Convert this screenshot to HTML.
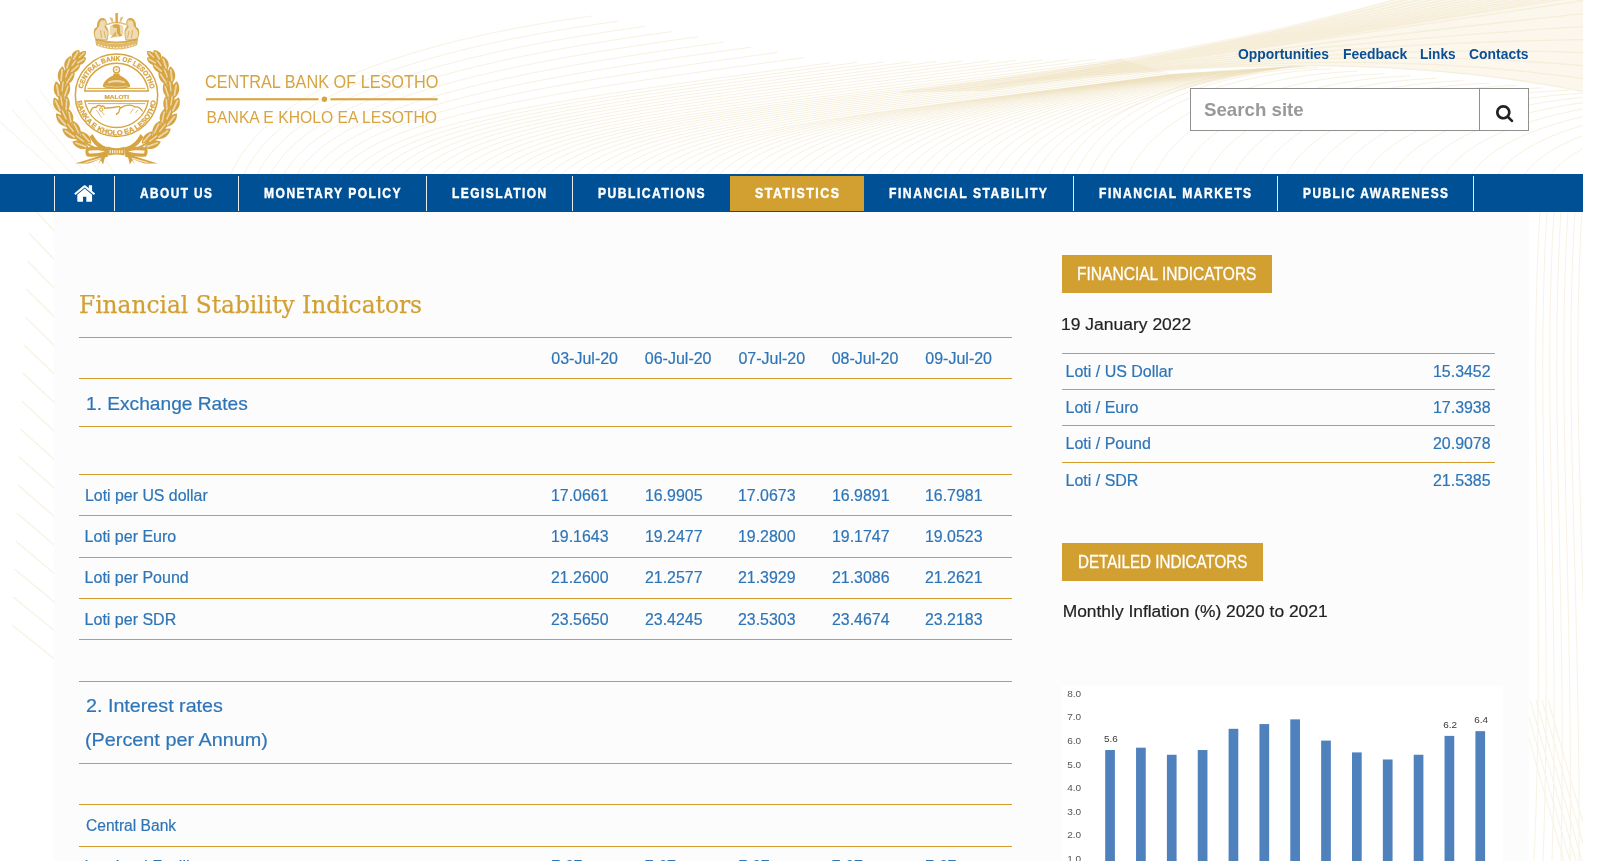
<!DOCTYPE html>
<html lang="en"><head><meta charset="utf-8"><title>Financial Stability Indicators - Central Bank of Lesotho</title>
<style>
html,body{margin:0;padding:0}
body{width:1603px;height:861px;overflow:hidden;background:#fff;position:relative;font-family:'Liberation Sans',sans-serif;}
.abs{position:absolute}
.t{position:absolute;white-space:nowrap;line-height:1;transform-origin:0 50%;display:block}
#page{position:absolute;left:0;top:0;width:1583px;height:861px;overflow:hidden;will-change:transform}
#content{position:absolute;left:54px;top:212px;width:1475px;height:649px;background:#fcfcfc}
#nav{position:absolute;left:0;top:174px;width:1583px;height:38px;background:#005096}
#nav i{position:absolute;top:2px;height:35px;width:1px;background:#e9e9e9}
#nav b.act{position:absolute;left:730px;top:2px;width:134px;height:35px;background:#d29f31}
.hr{position:absolute;height:1px;background:#d59c2d}
.box{position:absolute;background:#d29f31}
#search{position:absolute;left:1190px;top:88px;width:337px;height:41px;border:1px solid #909090;background:#fff}
#search i{position:absolute;left:288px;top:0;width:1px;height:100%;background:#909090}
</style></head>
<body>
<div id="page">
<svg class="abs" style="left:0;top:0" width="1583" height="861" viewBox="0 0 1583 861" aria-hidden="true"><path d="M940,92Q1200,55 1400,-2L1585,-2L1585,92Q1330,40 940,92Z" fill="#f0e2be" opacity=".28"/><path d="M230.0,176C262.6,96.0 392.9,43.1 592.0,16.0M243.2,176C277.0,98.6 412.1,49.3 618.5,21.2M256.4,176C291.4,101.2 431.3,55.5 645.0,26.4M269.6,176C305.8,103.8 450.5,61.7 671.5,31.6M282.8,176C320.2,106.4 469.6,67.9 698.0,36.8M296.0,176C334.6,109.0 488.8,74.1 724.5,42.0M309.2,176C349.0,111.6 508.0,80.3 751.0,47.2M322.4,176C363.4,114.2 527.2,86.5 777.5,52.4M335.6,176C377.8,116.8 546.4,92.7 804.0,57.6M348.8,176C392.2,119.4 565.6,98.9 830.5,62.8M362.0,176C406.6,119.2 584.8,99.6 857.0,62.4M375.2,176C420.9,119.0 603.9,100.2 883.5,62.1M388.4,176C435.3,118.9 623.1,100.9 910.0,61.8M401.6,176C449.7,118.7 642.3,101.5 936.5,61.4M414.8,176C464.1,118.5 661.5,102.2 963.0,61.0M428.0,176C478.5,118.3 680.7,102.8 989.5,60.7M441.2,176C492.9,118.2 699.9,103.5 1016.0,60.3M454.4,176C507.3,118.0 719.0,104.1 1042.5,60.0M467.6,176C521.7,117.8 738.2,104.8 1069.0,59.6M480.8,176C536.1,117.7 757.4,105.4 1095.5,59.3M494.0,176C550.5,117.5 776.6,106.0 1122.0,58.9M507.2,176C562.9,118.3 785.8,107.0 1126.2,60.5M520.4,176C575.3,118.9 794.9,107.5 1130.4,61.8M533.6,176C587.7,119.5 804.0,108.1 1134.6,63.0M546.8,176C600.1,120.1 813.2,108.6 1138.8,64.2M560.0,176C612.5,120.7 822.3,109.2 1143.0,65.5M573.2,176C624.9,121.3 831.5,109.7 1147.2,66.7M586.4,176C637.2,122.0 840.6,110.3 1151.4,67.9M599.6,176C649.6,122.6 849.8,110.9 1155.6,69.2M612.8,176C662.0,123.2 858.9,111.4 1159.8,70.4M626.0,176C674.4,123.8 868.1,112.0 1164.0,71.6M639.2,176C686.8,124.4 877.2,112.5 1168.2,72.9M652.4,176C699.2,125.0 886.4,113.1 1172.4,74.1M665.6,176C711.6,124.9 895.5,112.1 1176.6,73.8M678.8,176C724.0,124.8 904.7,111.2 1180.8,73.5M692.0,176C736.4,124.6 913.8,110.3 1185.0,73.3M705.2,176C748.8,124.5 923.0,109.3 1189.2,73.0M718.4,176C761.1,124.4 932.2,108.4 1193.4,72.7M731.6,176C773.5,124.2 941.3,107.4 1197.6,72.5M744.8,176C785.9,124.1 950.4,106.5 1201.8,72.2M758.0,176C798.3,124.0 959.6,105.5 1206.0,71.9M771.2,176C810.7,123.8 968.7,104.6 1210.2,71.7M784.4,176C823.1,123.7 977.9,103.6 1214.4,71.4M797.6,176C835.5,123.6 987.0,102.7 1218.6,71.1M810.8,176C847.9,123.4 996.2,101.8 1222.8,70.9M824.0,176C860.3,123.3 1005.4,100.8 1227.0,70.6M837.2,176C872.7,123.2 1014.5,99.9 1231.2,70.3M850.4,176C885.0,123.0 1023.6,98.9 1235.4,70.1M863.6,176C897.4,122.9 1032.8,98.0 1239.6,69.8M876.8,176C909.8,122.8 1041.9,97.0 1243.8,69.5M890.0,176C922.2,122.6 1051.1,96.1 1248.0,69.2M903.2,176C934.6,122.5 1060.2,95.2 1252.2,69.0M916.4,176C947.0,122.4 1069.4,94.2 1256.4,68.7M929.6,176C959.4,122.2 1078.5,93.3 1260.6,68.4M942.8,176C971.8,122.1 1087.7,92.3 1264.8,68.2M956.0,176C984.2,122.0 1096.8,91.4 1269.0,67.9M969.2,176C996.6,121.8 1106.0,90.4 1273.2,67.6M982.4,176C1008.9,121.7 1115.2,89.5 1277.4,67.4M995.6,176C1021.3,121.5 1124.3,88.5 1281.6,67.1M1008.8,176C1033.7,121.4 1133.4,87.6 1285.8,66.8M1022.0,176C1046.1,121.3 1142.6,86.7 1290.0,66.6M1035.2,176C1058.5,121.1 1151.7,85.7 1294.2,66.3M1048.4,176C1070.9,121.0 1160.9,84.8 1298.4,66.0M1061.6,176C1083.3,121.1 1170.0,71.1 1302.6,66.2M1074.8,176C1095.7,121.3 1179.2,71.3 1306.8,66.6M1088.0,176C1108.7,121.8 1191.5,72.2 1318.0,67.6M1101.2,176C1121.9,122.4 1204.7,73.4 1331.2,68.8M1127.6,176C1148.3,123.6 1231.1,75.8 1357.6,71.2M1154.0,176C1174.7,124.8 1257.5,78.2 1384.0,73.6M1180.4,176C1201.1,126.0 1283.9,80.5 1410.4,75.9M1206.8,176C1227.5,127.2 1310.3,82.9 1436.8,78.3M1233.2,176C1253.9,128.3 1336.7,85.3 1463.2,80.7M1259.6,176C1280.3,129.5 1363.1,87.7 1489.6,83.1M1286.0,176C1306.7,130.7 1389.5,90.0 1516.0,85.4M1312.4,176C1333.1,131.9 1415.9,92.4 1542.4,87.8M1338.8,176C1359.5,133.1 1442.3,94.8 1568.8,90.2M1365.2,176C1385.9,134.3 1468.7,97.2 1595.2,92.6M1391.6,176C1412.3,135.5 1495.1,99.5 1621.6,94.9M1418.0,176C1438.7,136.7 1521.5,101.9 1648.0,97.3M1444.4,176C1465.1,137.8 1547.9,104.3 1674.4,99.7M1470.8,176C1491.5,139.0 1574.3,106.7 1700.8,102.1M1497.2,176C1517.9,140.2 1600.7,109.0 1727.2,104.4M1523.6,176C1544.3,141.4 1627.1,111.4 1753.6,106.8M1550.0,176C1570.7,142.6 1653.5,113.8 1780.0,109.2" fill="none" stroke="#e6d3a3" stroke-width="1" opacity=".32"/><path d="M900.0,92.2Q1200.0,55.0 1400.0,-2.0M904.0,92.2Q1206.2,54.3 1413.1,-2.0M908.0,92.1Q1212.4,53.6 1426.2,-2.0M912.0,92.0Q1218.6,52.9 1439.3,-2.0M916.0,91.9Q1224.8,52.1 1452.4,-2.0M920.0,91.8Q1231.0,51.4 1465.5,-2.0M924.0,91.7Q1237.1,50.7 1478.6,-2.0M928.0,91.6Q1243.3,50.0 1491.7,-2.0M932.0,91.5Q1249.5,49.3 1504.8,-2.0M936.0,91.4Q1255.7,48.6 1517.9,-2.0M940.0,91.3Q1261.9,47.9 1531.0,-2.0M944.0,91.3Q1268.1,47.1 1544.0,-2.0M948.0,91.2Q1274.3,46.4 1557.1,-2.0M952.0,91.1Q1280.5,45.7 1570.2,-2.0M956.0,91.0Q1286.7,45.0 1585.0,0.3M960.0,90.9Q1292.9,44.3 1585.0,13.4M964.0,90.8Q1299.0,43.6 1585.0,26.5M968.0,90.7Q1305.2,42.9 1585.0,39.6M972.0,90.6Q1311.4,42.1 1585.0,52.7M976.0,90.5Q1317.6,41.4 1585.0,65.8M980.0,90.5Q1323.8,40.7 1585.0,78.9M984.0,90.4Q1330.0,40.0 1585.0,92.0" fill="none" stroke="#e3cb92" stroke-width="1.3" opacity=".22"/><path d="M30.0,205L62.0,239M28.8,233L61.5,267M27.6,261L61.0,295M26.4,289L60.5,323M25.2,317L60.0,351M24.0,345L59.5,379M22.8,373L59.0,407M21.6,401L58.5,435M20.4,429L58.0,463M19.2,457L57.5,491M18.0,485L57.0,519M16.8,513L56.5,547M15.6,541L56.0,575M14.4,569L55.5,603M13.2,597L55.0,631M12.0,625L54.5,659" fill="none" stroke="#efe3c2" stroke-width="1.6" opacity=".42"/><path d="M-2,120L60,176M12,110L74,176M26,100L88,176M40,90L102,176M54,80L116,176" fill="none" stroke="#efe3c2" stroke-width="1.4" opacity=".3"/><path d="M1540,212C1528,400 1546,600 1534,861M1547,212C1535,400 1553,600 1543,861M1554,212C1542,400 1560,600 1552,861M1561,212C1549,400 1567,600 1561,861M1568,212C1556,400 1574,600 1570,861M1575,212C1563,400 1581,600 1579,861M1582,212C1570,400 1588,600 1588,861M1518,700L1564,861M1524,700L1570,861M1530,700L1576,861M1536,700L1582,861M1542,700L1588,861M1548,700L1594,861" fill="none" stroke="#efe3c2" stroke-width="1.1" opacity=".42"/></svg>
<div id="content"></div>
<header>
<svg class="abs" style="left:50px;top:8px" width="392" height="160" viewBox="50 8 392 160" role="img" aria-label="Central Bank of Lesotho"><path d="M95.2,40.5 Q116.5,47.5 138,40.3 L137.2,45.2 Q116.5,53.5 96.2,45.4 Z" fill="#d6a440" opacity=".78"/>
<path d="M96,39.6 Q116.5,45.6 137.3,39.4" fill="none" stroke="#d6a440" stroke-width="2.2" opacity=".9"/>
<path d="M98,44.6 Q116.5,51 135.4,44.4" fill="none" stroke="#fff" stroke-width="1.3" stroke-dasharray="1.6 1.5" opacity=".75"/>
<path d="M99.5,47 Q116.5,52.8 133.6,46.8" fill="none" stroke="#fff" stroke-width=".8" stroke-dasharray="1.2 2" opacity=".6"/>
<path d="M96.0,40 C93.5,34 94.0,29 97.5,27 C97.0,22 99.5,18.3 103.0,18.6 C106.5,19 107.0,23 105.5,26.5 C108.5,29 108.5,35 107.0,40 Z" fill="#d6a440" fill-opacity=".38" stroke="#d6a440" stroke-width="1.1" stroke-opacity=".85"/>
<path d="M97.5,27.5 C95.0,27 93.7,30 94.5,34 C95.0,31 96.0,29.5 97.5,29 Z" fill="#d6a440" opacity=".8"/>
<path d="M104.5,20 C101.5,18 98.0,20.5 98.2,27" fill="none" stroke="#d6a440" stroke-width="1.8" opacity=".85"/>
<path d="M104.5,26 L107.5,31 M100.5,30 L101.5,38 M104.0,31 L105.5,38" stroke="#d6a440" stroke-width="1.1" opacity=".7"/>
<path d="M137.0,40 C139.5,34 139.0,29 135.5,27 C136.0,22 133.5,18.3 130.0,18.6 C126.5,19 126.0,23 127.5,26.5 C124.5,29 124.5,35 126.0,40 Z" fill="#d6a440" fill-opacity=".38" stroke="#d6a440" stroke-width="1.1" stroke-opacity=".85"/>
<path d="M135.5,27.5 C138.0,27 139.3,30 138.5,34 C138.0,31 137.0,29.5 135.5,29 Z" fill="#d6a440" opacity=".8"/>
<path d="M128.5,20 C131.5,18 135.0,20.5 134.8,27" fill="none" stroke="#d6a440" stroke-width="1.8" opacity=".85"/>
<path d="M128.5,26 L125.5,31 M132.5,30 L131.5,38 M129.0,31 L127.5,38" stroke="#d6a440" stroke-width="1.1" opacity=".7"/>
<path d="M110,26 Q116.5,21.5 123,26 L123.6,34 Q116.5,41 109.4,34 Z" fill="#d6a440" opacity=".42"/>
<path d="M112.6,25.6 Q116,23.2 119.6,25.2 L120.4,33.5 L122.6,35.8 L119.5,36.6 L117,33 L116.8,28 L113,27.6 Z" fill="#d6a440" opacity=".95"/>
<path d="M110,38.5 L116,31 L116.5,36 Z" fill="#d6a440" opacity=".75"/>
<rect x="115.4" y="13" width="2.5" height="10" fill="#d6a440" opacity=".95"/>
<path d="M109.3,17.3 L112.6,18 L113.6,22.6 L111.4,21.4 Z M123.4,16.6 L120.4,17.6 L119.4,22.4 L121.6,21 Z" fill="#d6a440" opacity=".7"/>
<path d="M107,24.5 Q116.5,20.5 126,24.5" fill="none" stroke="#d6a440" stroke-width="1.4" opacity=".7"/><path d="M97.8,149.0 L94.2,147.6 L90.8,145.9 L87.5,144.0 L84.3,141.8 L81.3,139.5 L78.4,136.9 L75.8,134.2 L73.3,131.2 L71.1,128.1 L69.0,124.9 L67.2,121.5 L65.7,118.0 L64.4,114.4 L63.3,110.8 L62.5,107.0 L62.0,103.2 L61.7,99.4 L61.7,95.6 L62.0,91.8 L62.5,88.0 L63.3,84.2 L64.4,80.6 L65.7,77.0 L67.2,73.5 L69.0,70.1 L71.1,66.9 L73.3,63.8 L75.8,60.8 L78.4,58.1" fill="none" stroke="#d6a440" stroke-width="2"/>
<path d="M88.7,147.7C85.1,139.6 76.8,139.3 72.3,141.7C74.3,146.4 80.8,151.5 88.7,147.7Z" fill="#d6a440" opacity="1.0"/><path d="M85.7,146.6L75.9,143.0" stroke="#fff" stroke-width="1.85" stroke-linecap="round" opacity=".55"/>
<path d="M91.2,143.8C91.5,135.8 84.9,131.6 80.2,131.3C79.9,136.0 83.2,143.1 91.2,143.8Z" fill="#d6a440" opacity="1.0"/><path d="M89.2,141.5L82.6,134.1" stroke="#fff" stroke-width="1.63" stroke-linecap="round" opacity=".55"/>
<path d="M85.8,142.9C84.2,135.7 77.3,133.1 73.1,133.7C73.9,137.9 78.4,143.7 85.8,142.9Z" fill="#d6a440" opacity="1.0"/><path d="M83.5,141.3L75.9,135.7" stroke="#fff" stroke-width="1.45" stroke-linecap="round" opacity=".55"/>
<path d="M76.7,138.7C75.3,130.1 67.4,127.6 62.3,128.7C63.0,133.8 68.0,140.4 76.7,138.7Z" fill="#d6a440" opacity="1.0"/><path d="M74.1,136.9L65.5,130.9" stroke="#fff" stroke-width="1.85" stroke-linecap="round" opacity=".55"/>
<path d="M80.1,135.7C82.5,128.0 77.2,122.3 72.7,120.8C71.2,125.2 72.5,132.9 80.1,135.7Z" fill="#d6a440" opacity="1.0"/><path d="M78.8,133.0L74.3,124.1" stroke="#fff" stroke-width="1.63" stroke-linecap="round" opacity=".55"/>
<path d="M75.1,133.4C75.5,126.0 69.5,121.8 65.2,121.2C64.9,125.5 67.8,132.3 75.1,133.4Z" fill="#d6a440" opacity="1.0"/><path d="M73.3,131.2L67.4,123.9" stroke="#fff" stroke-width="1.45" stroke-linecap="round" opacity=".55"/>
<path d="M67.4,127.0C68.2,118.3 61.2,113.9 56.1,113.6C55.5,118.7 58.6,126.4 67.4,127.0Z" fill="#d6a440" opacity="1.0"/><path d="M65.3,124.6L58.6,116.6" stroke="#fff" stroke-width="1.85" stroke-linecap="round" opacity=".55"/>
<path d="M71.4,124.9C75.7,118.1 72.1,111.2 68.2,108.6C65.6,112.6 64.9,120.3 71.4,124.9Z" fill="#d6a440" opacity="1.0"/><path d="M70.9,122.0L68.9,112.2" stroke="#fff" stroke-width="1.63" stroke-linecap="round" opacity=".55"/>
<path d="M67.2,121.5C69.5,114.4 64.8,108.8 60.8,107.1C59.4,111.2 60.4,118.5 67.2,121.5Z" fill="#d6a440" opacity="1.0"/><path d="M66.1,118.9L62.2,110.3" stroke="#fff" stroke-width="1.45" stroke-linecap="round" opacity=".55"/>
<path d="M61.4,113.3C64.5,105.1 58.9,99.0 54.0,97.4C52.0,102.2 53.1,110.4 61.4,113.3Z" fill="#d6a440" opacity="1.0"/><path d="M60.1,110.5L55.6,100.9" stroke="#fff" stroke-width="1.85" stroke-linecap="round" opacity=".55"/>
<path d="M65.9,112.3C71.8,106.9 70.0,99.3 66.9,95.8C63.4,98.9 60.7,106.2 65.9,112.3Z" fill="#d6a440" opacity="1.0"/><path d="M66.1,109.4L66.7,99.4" stroke="#fff" stroke-width="1.63" stroke-linecap="round" opacity=".55"/>
<path d="M62.7,107.9C66.7,101.7 63.6,95.0 60.2,92.4C57.8,95.9 56.9,103.3 62.7,107.9Z" fill="#d6a440" opacity="1.0"/><path d="M62.2,105.1L60.7,95.8" stroke="#fff" stroke-width="1.45" stroke-linecap="round" opacity=".55"/>
<path d="M59.2,98.5C64.3,91.4 60.5,84.1 56.1,81.3C53.0,85.4 51.9,93.6 59.2,98.5Z" fill="#d6a440" opacity="1.0"/><path d="M58.6,95.4L56.8,85.1" stroke="#fff" stroke-width="1.85" stroke-linecap="round" opacity=".55"/>
<path d="M63.8,98.7C70.9,95.0 71.2,87.2 69.1,83.0C64.8,85.1 60.4,91.5 63.8,98.7Z" fill="#d6a440" opacity="1.0"/><path d="M64.7,95.9L67.9,86.5" stroke="#fff" stroke-width="1.63" stroke-linecap="round" opacity=".55"/>
<path d="M61.8,93.6C67.3,88.7 66.1,81.4 63.4,78.0C60.2,80.8 57.5,87.6 61.8,93.6Z" fill="#d6a440" opacity="1.0"/><path d="M62.1,90.8L63.1,81.4" stroke="#fff" stroke-width="1.45" stroke-linecap="round" opacity=".55"/>
<path d="M60.9,83.6C67.7,78.1 65.8,70.0 62.4,66.2C58.3,69.4 55.1,77.0 60.9,83.6Z" fill="#d6a440" opacity="1.0"/><path d="M61.1,80.5L62.1,70.0" stroke="#fff" stroke-width="1.85" stroke-linecap="round" opacity=".55"/>
<path d="M65.2,85.0C73.1,83.3 75.4,75.8 74.4,71.2C69.8,72.1 63.8,77.1 65.2,85.0Z" fill="#d6a440" opacity="1.0"/><path d="M66.9,82.6L72.4,74.2" stroke="#fff" stroke-width="1.63" stroke-linecap="round" opacity=".55"/>
<path d="M64.7,79.6C71.3,76.2 72.0,68.9 70.3,64.9C66.4,66.8 62.0,72.7 64.7,79.6Z" fill="#d6a440" opacity="1.0"/><path d="M65.7,77.0L69.1,68.1" stroke="#fff" stroke-width="1.45" stroke-linecap="round" opacity=".55"/>
<path d="M65.9,70.6C73.6,67.5 73.5,60.1 70.9,55.9C66.3,57.6 61.7,63.4 65.9,70.6Z" fill="#d6a440" opacity="1.0"/><path d="M66.8,67.9L69.8,59.1" stroke="#fff" stroke-width="1.85" stroke-linecap="round" opacity=".55"/>
<path d="M69.8,73.0C77.3,73.6 80.7,67.5 80.6,63.1C76.2,62.6 69.8,65.4 69.8,73.0Z" fill="#d6a440" opacity="1.0"/><path d="M71.7,71.2L78.3,65.3" stroke="#fff" stroke-width="1.63" stroke-linecap="round" opacity=".55"/>
<path d="M70.6,67.6C77.4,66.4 79.4,60.2 78.5,56.2C74.5,56.8 69.3,60.8 70.6,67.6Z" fill="#d6a440" opacity="1.0"/><path d="M72.0,65.6L76.8,58.7" stroke="#fff" stroke-width="1.45" stroke-linecap="round" opacity=".55"/>
<path d="M72.6,60.6C80.2,60.1 81.0,54.0 79.0,49.9C74.5,50.1 69.4,53.6 72.6,60.6Z" fill="#d6a440" opacity="1.0"/><path d="M73.7,58.7L77.6,52.3" stroke="#fff" stroke-width="1.85" stroke-linecap="round" opacity=".55"/>
<path d="M75.9,63.8C82.3,66.5 85.8,61.9 86.1,57.8C82.4,56.2 76.7,56.9 75.9,63.8Z" fill="#d6a440" opacity="1.0"/><path d="M77.7,62.8L83.9,59.2" stroke="#fff" stroke-width="1.63" stroke-linecap="round" opacity=".55"/>
<path d="M77.8,58.7C84.0,59.6 86.4,54.7 86.0,51.0C82.3,50.4 77.3,52.4 77.8,58.7Z" fill="#d6a440" opacity="1.0"/><path d="M79.3,57.3L84.2,52.7" stroke="#fff" stroke-width="1.45" stroke-linecap="round" opacity=".55"/><path d="M135.2,149.0 L138.8,147.6 L142.2,145.9 L145.5,144.0 L148.7,141.8 L151.7,139.5 L154.6,136.9 L157.2,134.2 L159.7,131.2 L161.9,128.1 L164.0,124.9 L165.8,121.5 L167.3,118.0 L168.6,114.4 L169.7,110.8 L170.5,107.0 L171.0,103.2 L171.3,99.4 L171.3,95.6 L171.0,91.8 L170.5,88.0 L169.7,84.2 L168.6,80.6 L167.3,77.0 L165.8,73.5 L164.0,70.1 L161.9,66.9 L159.7,63.8 L157.2,60.8 L154.6,58.1" fill="none" stroke="#d6a440" stroke-width="2"/>
<path d="M144.3,147.7C152.2,151.5 158.7,146.4 160.7,141.7C156.2,139.3 147.9,139.6 144.3,147.7Z" fill="#d6a440" opacity="1.0"/><path d="M147.3,146.6L157.1,143.0" stroke="#fff" stroke-width="1.85" stroke-linecap="round" opacity=".55"/>
<path d="M141.8,143.8C149.8,143.1 153.1,136.0 152.8,131.3C148.1,131.6 141.5,135.8 141.8,143.8Z" fill="#d6a440" opacity="1.0"/><path d="M143.8,141.5L150.4,134.1" stroke="#fff" stroke-width="1.63" stroke-linecap="round" opacity=".55"/>
<path d="M147.2,142.9C154.6,143.7 159.1,137.9 159.9,133.7C155.7,133.1 148.8,135.7 147.2,142.9Z" fill="#d6a440" opacity="1.0"/><path d="M149.5,141.3L157.1,135.7" stroke="#fff" stroke-width="1.45" stroke-linecap="round" opacity=".55"/>
<path d="M156.3,138.7C165.0,140.4 170.0,133.8 170.7,128.7C165.6,127.6 157.7,130.1 156.3,138.7Z" fill="#d6a440" opacity="1.0"/><path d="M158.9,136.9L167.5,130.9" stroke="#fff" stroke-width="1.85" stroke-linecap="round" opacity=".55"/>
<path d="M152.9,135.7C160.5,132.9 161.8,125.2 160.3,120.8C155.8,122.3 150.5,128.0 152.9,135.7Z" fill="#d6a440" opacity="1.0"/><path d="M154.2,133.0L158.7,124.1" stroke="#fff" stroke-width="1.63" stroke-linecap="round" opacity=".55"/>
<path d="M157.9,133.4C165.2,132.3 168.1,125.5 167.8,121.2C163.5,121.8 157.5,126.0 157.9,133.4Z" fill="#d6a440" opacity="1.0"/><path d="M159.7,131.2L165.6,123.9" stroke="#fff" stroke-width="1.45" stroke-linecap="round" opacity=".55"/>
<path d="M165.6,127.0C174.4,126.4 177.5,118.7 176.9,113.6C171.8,113.9 164.8,118.3 165.6,127.0Z" fill="#d6a440" opacity="1.0"/><path d="M167.7,124.6L174.4,116.6" stroke="#fff" stroke-width="1.85" stroke-linecap="round" opacity=".55"/>
<path d="M161.6,124.9C168.1,120.3 167.4,112.6 164.8,108.6C160.9,111.2 157.3,118.1 161.6,124.9Z" fill="#d6a440" opacity="1.0"/><path d="M162.1,122.0L164.1,112.2" stroke="#fff" stroke-width="1.63" stroke-linecap="round" opacity=".55"/>
<path d="M165.8,121.5C172.6,118.5 173.6,111.2 172.2,107.1C168.2,108.8 163.5,114.4 165.8,121.5Z" fill="#d6a440" opacity="1.0"/><path d="M166.9,118.9L170.8,110.3" stroke="#fff" stroke-width="1.45" stroke-linecap="round" opacity=".55"/>
<path d="M171.6,113.3C179.9,110.4 181.0,102.2 179.0,97.4C174.1,99.0 168.5,105.1 171.6,113.3Z" fill="#d6a440" opacity="1.0"/><path d="M172.9,110.5L177.4,100.9" stroke="#fff" stroke-width="1.85" stroke-linecap="round" opacity=".55"/>
<path d="M167.1,112.3C172.3,106.2 169.6,98.9 166.1,95.8C163.0,99.3 161.2,106.9 167.1,112.3Z" fill="#d6a440" opacity="1.0"/><path d="M166.9,109.4L166.3,99.4" stroke="#fff" stroke-width="1.63" stroke-linecap="round" opacity=".55"/>
<path d="M170.3,107.9C176.1,103.3 175.2,95.9 172.8,92.4C169.4,95.0 166.3,101.7 170.3,107.9Z" fill="#d6a440" opacity="1.0"/><path d="M170.8,105.1L172.3,95.8" stroke="#fff" stroke-width="1.45" stroke-linecap="round" opacity=".55"/>
<path d="M173.8,98.5C181.1,93.6 180.0,85.4 176.9,81.3C172.5,84.1 168.7,91.4 173.8,98.5Z" fill="#d6a440" opacity="1.0"/><path d="M174.4,95.4L176.2,85.1" stroke="#fff" stroke-width="1.85" stroke-linecap="round" opacity=".55"/>
<path d="M169.2,98.7C172.6,91.5 168.2,85.1 163.9,83.0C161.8,87.2 162.1,95.0 169.2,98.7Z" fill="#d6a440" opacity="1.0"/><path d="M168.3,95.9L165.1,86.5" stroke="#fff" stroke-width="1.63" stroke-linecap="round" opacity=".55"/>
<path d="M171.2,93.6C175.5,87.6 172.8,80.8 169.6,78.0C166.9,81.4 165.7,88.7 171.2,93.6Z" fill="#d6a440" opacity="1.0"/><path d="M170.9,90.8L169.9,81.4" stroke="#fff" stroke-width="1.45" stroke-linecap="round" opacity=".55"/>
<path d="M172.1,83.6C177.9,77.0 174.7,69.4 170.6,66.2C167.2,70.0 165.3,78.1 172.1,83.6Z" fill="#d6a440" opacity="1.0"/><path d="M171.9,80.5L170.9,70.0" stroke="#fff" stroke-width="1.85" stroke-linecap="round" opacity=".55"/>
<path d="M167.8,85.0C169.2,77.1 163.2,72.1 158.6,71.2C157.6,75.8 159.9,83.3 167.8,85.0Z" fill="#d6a440" opacity="1.0"/><path d="M166.1,82.6L160.6,74.2" stroke="#fff" stroke-width="1.63" stroke-linecap="round" opacity=".55"/>
<path d="M168.3,79.6C171.0,72.7 166.6,66.8 162.7,64.9C161.0,68.9 161.7,76.2 168.3,79.6Z" fill="#d6a440" opacity="1.0"/><path d="M167.3,77.0L163.9,68.1" stroke="#fff" stroke-width="1.45" stroke-linecap="round" opacity=".55"/>
<path d="M167.1,70.6C171.3,63.4 166.7,57.6 162.1,55.9C159.5,60.1 159.4,67.5 167.1,70.6Z" fill="#d6a440" opacity="1.0"/><path d="M166.2,67.9L163.2,59.1" stroke="#fff" stroke-width="1.85" stroke-linecap="round" opacity=".55"/>
<path d="M163.2,73.0C163.2,65.4 156.8,62.6 152.4,63.1C152.3,67.5 155.7,73.6 163.2,73.0Z" fill="#d6a440" opacity="1.0"/><path d="M161.3,71.2L154.7,65.3" stroke="#fff" stroke-width="1.63" stroke-linecap="round" opacity=".55"/>
<path d="M162.4,67.6C163.7,60.8 158.5,56.8 154.5,56.2C153.6,60.2 155.6,66.4 162.4,67.6Z" fill="#d6a440" opacity="1.0"/><path d="M161.0,65.6L156.2,58.7" stroke="#fff" stroke-width="1.45" stroke-linecap="round" opacity=".55"/>
<path d="M160.4,60.6C163.6,53.6 158.5,50.1 154.0,49.9C152.0,54.0 152.8,60.1 160.4,60.6Z" fill="#d6a440" opacity="1.0"/><path d="M159.3,58.7L155.4,52.3" stroke="#fff" stroke-width="1.85" stroke-linecap="round" opacity=".55"/>
<path d="M157.1,63.8C156.3,56.9 150.6,56.2 146.9,57.8C147.2,61.9 150.7,66.5 157.1,63.8Z" fill="#d6a440" opacity="1.0"/><path d="M155.3,62.8L149.1,59.2" stroke="#fff" stroke-width="1.63" stroke-linecap="round" opacity=".55"/>
<path d="M155.2,58.7C155.7,52.4 150.7,50.4 147.0,51.0C146.6,54.7 149.0,59.6 155.2,58.7Z" fill="#d6a440" opacity="1.0"/><path d="M153.7,57.3L148.8,52.7" stroke="#fff" stroke-width="1.45" stroke-linecap="round" opacity=".55"/><path d="M92.5,134 C96.5,142 102.5,146.5 108.5,147.2 L108.5,150 C100.5,150 93.5,145 89.5,137 Z" fill="#d6a440"/>
<path d="M108.5,148 C100.5,146.4 90.5,146 86.1,148 C84.7,151 85.5,154.6 87.1,156.4 C94.5,157.4 102.5,156.4 108.5,154 Z" fill="#d6a440"/>
<path d="M105.0,151.6 C100.5,150 92.5,150 88.5,150.8 C88.3,152 88.5,152.8 89.1,153.4 C94.5,153.6 100.5,153.2 105.0,151.6 Z" fill="#fff" opacity=".92"/>
<path d="M107.5,153.5 L75.1,163.4 L88.5,163.6 L108.0,156.6 Z" fill="#d6a440"/>
<path d="M101.5,157.4 L83.5,162.6 L87.5,162.8 L102.5,158.6 Z" fill="#fff" opacity=".7"/>
<path d="M108.5,154 L105.1,156.5 L103.1,164.6 L100.9,160.5 L97.9,164.6 L102.5,155.8 Z" fill="#d6a440"/>
<path d="M140.5,134 C136.5,142 130.5,146.5 124.5,147.2 L124.5,150 C132.5,150 139.5,145 143.5,137 Z" fill="#d6a440"/>
<path d="M124.5,148 C132.5,146.4 142.5,146 146.9,148 C148.3,151 147.5,154.6 145.9,156.4 C138.5,157.4 130.5,156.4 124.5,154 Z" fill="#d6a440"/>
<path d="M128.0,151.6 C132.5,150 140.5,150 144.5,150.8 C144.7,152 144.5,152.8 143.9,153.4 C138.5,153.6 132.5,153.2 128.0,151.6 Z" fill="#fff" opacity=".92"/>
<path d="M125.5,153.5 L157.9,163.4 L144.5,163.6 L125.0,156.6 Z" fill="#d6a440"/>
<path d="M131.5,157.4 L149.5,162.6 L145.5,162.8 L130.5,158.6 Z" fill="#fff" opacity=".7"/>
<path d="M124.5,154 L127.9,156.5 L129.9,164.6 L132.1,160.5 L135.1,164.6 L130.5,155.8 Z" fill="#d6a440"/>
<path d="M108.2,146.6 L111,147.6 Q116.5,149 122,147.6 L124.4,146.6 L124.4,155.4 Q116.5,153.6 108.2,155.4 Z" fill="#d6a440"/>
<rect x="109.6" y="150.2" width="1.2" height="3" fill="#fff" opacity=".85"/>
<rect x="112" y="150.2" width="1.2" height="3" fill="#fff" opacity=".85"/>
<rect x="114.3" y="150.2" width="1.2" height="3" fill="#fff" opacity=".85"/>
<rect x="116.6" y="150.2" width="1.2" height="3" fill="#fff" opacity=".85"/>
<rect x="119" y="150.2" width="1.2" height="3" fill="#fff" opacity=".85"/>
<rect x="121.4" y="150.2" width="1.2" height="3" fill="#fff" opacity=".85"/><circle cx="116.5" cy="95.2" r="41.2" fill="none" stroke="#d6a440" stroke-width="1.5"/>
<path d="M84.6,91.0 A32.2,32.2 0 0 1 148.4,91.0 Z" fill="none" stroke="#d6a440" stroke-width="1.4"/>
<path d="M84.8,101.0 A32.2,32.2 0 0 0 148.2,101.0 Z" fill="none" stroke="#d6a440" stroke-width="1.4"/>
<path d="M87.6,88.4 L145.4,88.4 M87.8,103.6 L145.2,103.6" stroke="#d6a440" stroke-width=".9"/>
<path id="arcTop" d="M82.62,89.83 A34.3,34.3 0 0 1 150.38,89.83" fill="none"/>
<path id="arcBot" d="M76.90,100.06 A39.9,39.9 0 0 0 156.10,100.06" fill="none"/>
<text font-family="'Liberation Sans',sans-serif" font-weight="bold" font-size="6.9" fill="#d6a440" stroke="#d6a440" stroke-width=".25"><textPath href="#arcTop" startOffset="1" textLength="95.0" lengthAdjust="spacingAndGlyphs">CENTRAL BANK OF LESOTHO</textPath></text>
<text font-family="'Liberation Sans',sans-serif" font-weight="bold" font-size="6.9" fill="#d6a440" stroke="#d6a440" stroke-width=".25"><textPath href="#arcBot" startOffset="1" textLength="113.6" lengthAdjust="spacingAndGlyphs">BANKA E KHOLO EA LESOTHO</textPath></text>
<text x="116.8" y="98.5" font-family="'Liberation Sans',sans-serif" font-weight="bold" font-size="5.6" fill="#d6a440" stroke="#d6a440" stroke-width=".2" text-anchor="middle" textLength="24.5" lengthAdjust="spacingAndGlyphs">MALOTI</text>
<circle cx="116.5" cy="69.8" r="3.1" fill="none" stroke="#d6a440" stroke-width="1.3"/>
<circle cx="116.5" cy="69.8" r="1.2" fill="#d6a440" opacity=".7"/>
<path d="M113.6,73.4 L119.4,73.4 L119.8,75.6 C126,78 130,83 130.2,86.4 C127,89.4 106,89.4 102.8,86.4 C103,83 107,78 113.2,75.6 Z" fill="#d6a440"/>
<path d="M108.5,81.2 Q116.5,78.8 124.5,81.2 L125,83.4 Q116.5,81.2 108,83.4 Z" fill="#fff" opacity=".55"/>
<path d="M105.5,86 Q116.5,88.4 127.5,86" fill="none" stroke="#fff" stroke-width=".7" opacity=".6"/>
<path d="M90.5,112 C91.5,108 94,106.5 96,107.6 C96.5,105.4 99.5,104.6 101,106.4 C103,105.4 104.8,106.6 104.6,108.4 C108,107.6 114,107.8 117.8,106.6 C119.4,106.2 120.6,107.2 119.8,108.6 C119,110 119.6,111.6 118.4,112.8 C117.6,113.6 116.6,113.4 116.4,114.4 M119.8,108.6 C122.6,107 124.4,104.8 127.8,105.4 C130.4,104.4 133,105.6 135,107 C137.6,106.4 140.4,108 142.4,111" fill="none" stroke="#d6a440" stroke-width="1.3" stroke-linecap="round" stroke-linejoin="round"/>
<circle cx="101.2" cy="109.6" r="1.7" fill="none" stroke="#d6a440" stroke-width="1"/>
<path d="M96.4,110 L101.6,117.6 M101.6,111.6 L104.4,115 M133.6,108.6 L130,113.6 M138,109.6 L135.6,113" stroke="#d6a440" stroke-width=".9" opacity=".8"/><text x="205" y="88" font-family="'Liberation Sans',sans-serif" font-size="18.7" fill="#d6a440" textLength="233.3" lengthAdjust="spacingAndGlyphs">CENTRAL BANK OF LESOTHO</text>
<text x="206.6" y="122.5" font-family="'Liberation Sans',sans-serif" font-size="16.8" fill="#d6a440" textLength="230.4" lengthAdjust="spacingAndGlyphs">BANKA E KHOLO EA LESOTHO</text>
<rect x="206" y="98.2" width="112.6" height="2.1" fill="#d6a440"/><rect x="330.4" y="98.2" width="107.2" height="2.1" fill="#d6a440"/><circle cx="324.4" cy="99.3" r="2.7" fill="#d6a440"/></svg>
<div id="search"><i></i><svg class="abs" style="left:305px;top:15.7px" width="18.6" height="18.6" viewBox="0 0 1792 1792"><path fill="#222" d="M1152 704q0-185-131.500-316.500t-316.500-131.500-316.500 131.500-131.500 316.500 131.500 316.500 316.500 131.500 316.500-131.500 131.500-316.500zm512 832q0 52-38 90t-90 38q-54 0-90-38l-343-342q-179 124-399 124-143 0-273.500-55.500t-225-150-150-225-55.500-273.500 55.500-273.500 150-225 225-150 273.500-55.500 273.500 55.500 225 150 150 225 55.500 273.500q0 220-124 399l343 343q37 37 37 90z"/></svg></div>
<span class="t" style="left:1238.00px;top:46.00px;font-size:15px;color:#0a4f96;font-weight:bold;transform:scaleX(0.9255);">Opportunities</span>
<span class="t" style="left:1342.60px;top:46.00px;font-size:15px;color:#0a4f96;font-weight:bold;transform:scaleX(0.9277);">Feedback</span>
<span class="t" style="left:1420.00px;top:46.00px;font-size:15px;color:#0a4f96;font-weight:bold;transform:scaleX(0.9059);">Links</span>
<span class="t" style="left:1469.00px;top:46.00px;font-size:15px;color:#0a4f96;font-weight:bold;transform:scaleX(0.9270);">Contacts</span>
<span class="t" style="left:1204.30px;top:100.00px;font-size:19px;color:#999;font-weight:bold;transform:scaleX(0.9832);">Search site</span>
</header>
<nav id="nav"><i style="left:54px"></i><i style="left:114px"></i><i style="left:238px"></i><i style="left:426px"></i><i style="left:572px"></i><i style="left:1073px"></i><i style="left:1277px"></i><i style="left:1473px"></i><b class="act"></b>
<svg class="abs" style="left:73.8px;top:8px" width="23" height="23" viewBox="0 0 1792 1792"><path fill="#fff" d="M1408 992v480q0 26-19 45t-45 19h-384v-384h-256v384h-384q-26 0-45-19t-19-45v-480q0-1 .5-3t.5-3l575-474 575 474q1 2 1 6zm223-69l-62 74q-8 9-21 11h-3q-13 0-21-7l-692-577-692 577q-12 8-24 7-13-2-21-11l-62-74q-8-10-7-23.500t11-21.500l719-599q32-26 76-26t76 26l244 204v-195q0-14 9-23t23-9h192q14 0 23 9t9 23v408l219 182q10 8 11 21.500t-7 23.500z"/></svg>
</nav>
<span class="t" style="left:140.00px;top:185.00px;font-size:15.5px;color:#fff;font-weight:bold;letter-spacing:1.9px;transform:scaleX(0.7639);-webkit-text-stroke:.45px;">ABOUT US</span>
<span class="t" style="left:264.00px;top:185.00px;font-size:15.5px;color:#fff;font-weight:bold;letter-spacing:1.9px;transform:scaleX(0.7787);-webkit-text-stroke:.45px;">MONETARY POLICY</span>
<span class="t" style="left:452.00px;top:185.00px;font-size:15.5px;color:#fff;font-weight:bold;letter-spacing:1.9px;transform:scaleX(0.7722);-webkit-text-stroke:.45px;">LEGISLATION</span>
<span class="t" style="left:598.25px;top:185.00px;font-size:15.5px;color:#fff;font-weight:bold;letter-spacing:1.9px;transform:scaleX(0.7831);-webkit-text-stroke:.45px;">PUBLICATIONS</span>
<span class="t" style="left:755.00px;top:185.00px;font-size:15.5px;color:#fff;font-weight:bold;letter-spacing:1.9px;transform:scaleX(0.7983);-webkit-text-stroke:.45px;">STATISTICS</span>
<span class="t" style="left:889.00px;top:185.00px;font-size:15.5px;color:#fff;font-weight:bold;letter-spacing:1.9px;transform:scaleX(0.7873);-webkit-text-stroke:.45px;">FINANCIAL STABILITY</span>
<span class="t" style="left:1098.60px;top:185.00px;font-size:15.5px;color:#fff;font-weight:bold;letter-spacing:1.9px;transform:scaleX(0.7817);-webkit-text-stroke:.45px;">FINANCIAL MARKETS</span>
<span class="t" style="left:1302.50px;top:185.00px;font-size:15.5px;color:#fff;font-weight:bold;letter-spacing:1.9px;transform:scaleX(0.7673);-webkit-text-stroke:.45px;">PUBLIC AWARENESS</span>
<main>
<div class="hr" style="left:79px;top:337px;width:933px"></div><div class="hr" style="left:79px;top:378px;width:933px"></div><div class="hr" style="left:79px;top:426px;width:933px"></div><div class="hr" style="left:79px;top:474px;width:933px"></div><div class="hr" style="left:79px;top:515px;width:933px"></div><div class="hr" style="left:79px;top:557px;width:933px"></div><div class="hr" style="left:79px;top:598px;width:933px"></div><div class="hr" style="left:79px;top:639px;width:933px"></div><div class="hr" style="left:79px;top:681px;width:933px"></div><div class="hr" style="left:79px;top:763px;width:933px"></div><div class="hr" style="left:79px;top:804px;width:933px"></div><div class="hr" style="left:79px;top:846px;width:933px"></div><div class="hr" style="left:1062px;top:353px;width:433px"></div><div class="hr" style="left:1062px;top:389px;width:433px"></div><div class="hr" style="left:1062px;top:425px;width:433px"></div><div class="hr" style="left:1062px;top:462px;width:433px"></div>
<div class="box" style="left:1062px;top:255px;width:210px;height:38px"></div>
<div class="box" style="left:1062px;top:543px;width:201px;height:38px"></div>
<span class="t" style="left:78.60px;top:292.00px;font-size:25px;color:#d29f31;font-family:'DejaVu Serif',serif;transform:scaleX(0.9314);-webkit-text-stroke:0.25px;">Financial Stability Indicators</span>
<span class="t" style="left:85.50px;top:394.00px;font-size:19px;color:#2e75b8;transform:scaleX(1.0075);-webkit-text-stroke:0.2px;">1. Exchange Rates</span>
<span class="t" style="left:86.00px;top:696.00px;font-size:19px;color:#2e75b8;transform:scaleX(1.0370);-webkit-text-stroke:0.2px;">2. Interest rates</span>
<span class="t" style="left:85.20px;top:730.00px;font-size:19px;color:#2e75b8;transform:scaleX(1.0427);-webkit-text-stroke:0.2px;">(Percent per Annum)</span>
<span class="t" style="left:551.30px;top:351.00px;font-size:16px;color:#2e75b8;-webkit-text-stroke:0.2px;">03-Jul-20</span>
<span class="t" style="left:644.80px;top:351.00px;font-size:16px;color:#2e75b8;-webkit-text-stroke:0.2px;">06-Jul-20</span>
<span class="t" style="left:738.40px;top:351.00px;font-size:16px;color:#2e75b8;-webkit-text-stroke:0.2px;">07-Jul-20</span>
<span class="t" style="left:831.70px;top:351.00px;font-size:16px;color:#2e75b8;-webkit-text-stroke:0.2px;">08-Jul-20</span>
<span class="t" style="left:925.30px;top:351.00px;font-size:16px;color:#2e75b8;-webkit-text-stroke:0.2px;">09-Jul-20</span>
<span class="t" style="left:84.60px;top:488.00px;font-size:16px;color:#2e75b8;transform:scaleX(0.9925);-webkit-text-stroke:0.2px;">Loti per US dollar</span>
<span class="t" style="left:551.30px;top:488.00px;font-size:16px;color:#2e75b8;transform:scaleX(0.9941);-webkit-text-stroke:0.2px;">17.0661</span>
<span class="t" style="left:644.80px;top:488.00px;font-size:16px;color:#2e75b8;transform:scaleX(0.9941);-webkit-text-stroke:0.2px;">16.9905</span>
<span class="t" style="left:738.40px;top:488.00px;font-size:16px;color:#2e75b8;transform:scaleX(0.9941);-webkit-text-stroke:0.2px;">17.0673</span>
<span class="t" style="left:831.70px;top:488.00px;font-size:16px;color:#2e75b8;transform:scaleX(0.9941);-webkit-text-stroke:0.2px;">16.9891</span>
<span class="t" style="left:925.30px;top:488.00px;font-size:16px;color:#2e75b8;transform:scaleX(0.9941);-webkit-text-stroke:0.2px;">16.7981</span>
<span class="t" style="left:84.60px;top:529.00px;font-size:16px;color:#2e75b8;-webkit-text-stroke:0.2px;">Loti per Euro</span>
<span class="t" style="left:551.30px;top:529.00px;font-size:16px;color:#2e75b8;transform:scaleX(0.9941);-webkit-text-stroke:0.2px;">19.1643</span>
<span class="t" style="left:644.80px;top:529.00px;font-size:16px;color:#2e75b8;transform:scaleX(0.9941);-webkit-text-stroke:0.2px;">19.2477</span>
<span class="t" style="left:738.40px;top:529.00px;font-size:16px;color:#2e75b8;transform:scaleX(0.9941);-webkit-text-stroke:0.2px;">19.2800</span>
<span class="t" style="left:831.70px;top:529.00px;font-size:16px;color:#2e75b8;transform:scaleX(0.9941);-webkit-text-stroke:0.2px;">19.1747</span>
<span class="t" style="left:925.30px;top:529.00px;font-size:16px;color:#2e75b8;transform:scaleX(0.9941);-webkit-text-stroke:0.2px;">19.0523</span>
<span class="t" style="left:84.60px;top:570.00px;font-size:16px;color:#2e75b8;-webkit-text-stroke:0.2px;">Loti per Pound</span>
<span class="t" style="left:551.30px;top:570.00px;font-size:16px;color:#2e75b8;transform:scaleX(0.9941);-webkit-text-stroke:0.2px;">21.2600</span>
<span class="t" style="left:644.80px;top:570.00px;font-size:16px;color:#2e75b8;transform:scaleX(0.9941);-webkit-text-stroke:0.2px;">21.2577</span>
<span class="t" style="left:738.40px;top:570.00px;font-size:16px;color:#2e75b8;transform:scaleX(0.9941);-webkit-text-stroke:0.2px;">21.3929</span>
<span class="t" style="left:831.70px;top:570.00px;font-size:16px;color:#2e75b8;transform:scaleX(0.9941);-webkit-text-stroke:0.2px;">21.3086</span>
<span class="t" style="left:925.30px;top:570.00px;font-size:16px;color:#2e75b8;transform:scaleX(0.9941);-webkit-text-stroke:0.2px;">21.2621</span>
<span class="t" style="left:84.60px;top:612.00px;font-size:16px;color:#2e75b8;-webkit-text-stroke:0.2px;">Loti per SDR</span>
<span class="t" style="left:551.30px;top:612.00px;font-size:16px;color:#2e75b8;transform:scaleX(0.9941);-webkit-text-stroke:0.2px;">23.5650</span>
<span class="t" style="left:644.80px;top:612.00px;font-size:16px;color:#2e75b8;transform:scaleX(0.9941);-webkit-text-stroke:0.2px;">23.4245</span>
<span class="t" style="left:738.40px;top:612.00px;font-size:16px;color:#2e75b8;transform:scaleX(0.9941);-webkit-text-stroke:0.2px;">23.5303</span>
<span class="t" style="left:831.70px;top:612.00px;font-size:16px;color:#2e75b8;transform:scaleX(0.9941);-webkit-text-stroke:0.2px;">23.4674</span>
<span class="t" style="left:925.30px;top:612.00px;font-size:16px;color:#2e75b8;transform:scaleX(0.9941);-webkit-text-stroke:0.2px;">23.2183</span>
<span class="t" style="left:85.80px;top:818.00px;font-size:16px;color:#2e75b8;transform:scaleX(0.9741);-webkit-text-stroke:0.2px;">Central Bank</span>
<span class="t" style="left:84.60px;top:859.00px;font-size:16px;color:#2e75b8;-webkit-text-stroke:0.2px;">Lombard Facility</span>
<span class="t" style="left:551.30px;top:859.00px;font-size:16px;color:#2e75b8;-webkit-text-stroke:0.2px;">7.67</span>
<span class="t" style="left:644.80px;top:859.00px;font-size:16px;color:#2e75b8;-webkit-text-stroke:0.2px;">7.67</span>
<span class="t" style="left:738.40px;top:859.00px;font-size:16px;color:#2e75b8;-webkit-text-stroke:0.2px;">7.67</span>
<span class="t" style="left:831.70px;top:859.00px;font-size:16px;color:#2e75b8;-webkit-text-stroke:0.2px;">7.67</span>
<span class="t" style="left:925.30px;top:859.00px;font-size:16px;color:#2e75b8;-webkit-text-stroke:0.2px;">7.67</span>
<span class="t" style="left:1076.70px;top:265.00px;font-size:18.2px;color:#fff;transform:scaleX(0.8553);-webkit-text-stroke:0.3px;">FINANCIAL INDICATORS</span>
<span class="t" style="left:1061.10px;top:316.00px;font-size:17.4px;color:#222;transform:scaleX(1.0056);-webkit-text-stroke:0.2px;">19 January 2022</span>
<span class="t" style="left:1065.50px;top:364.00px;font-size:16px;color:#2e75b8;-webkit-text-stroke:0.2px;">Loti / US Dollar</span>
<span class="t" style="left:1433.00px;top:364.00px;font-size:16px;color:#2e75b8;transform:scaleX(0.9958);-webkit-text-stroke:0.2px;">15.3452</span>
<span class="t" style="left:1065.50px;top:400.00px;font-size:16px;color:#2e75b8;-webkit-text-stroke:0.2px;">Loti / Euro</span>
<span class="t" style="left:1433.00px;top:400.00px;font-size:16px;color:#2e75b8;transform:scaleX(0.9958);-webkit-text-stroke:0.2px;">17.3938</span>
<span class="t" style="left:1065.50px;top:436.00px;font-size:16px;color:#2e75b8;-webkit-text-stroke:0.2px;">Loti / Pound</span>
<span class="t" style="left:1433.00px;top:436.00px;font-size:16px;color:#2e75b8;transform:scaleX(0.9958);-webkit-text-stroke:0.2px;">20.9078</span>
<span class="t" style="left:1065.50px;top:473.00px;font-size:16px;color:#2e75b8;-webkit-text-stroke:0.2px;">Loti / SDR</span>
<span class="t" style="left:1433.00px;top:473.00px;font-size:16px;color:#2e75b8;transform:scaleX(0.9958);-webkit-text-stroke:0.2px;">21.5385</span>
<span class="t" style="left:1077.60px;top:553.00px;font-size:18.2px;color:#fff;transform:scaleX(0.8340);-webkit-text-stroke:0.3px;">DETAILED INDICATORS</span>
<span class="t" style="left:1062.70px;top:603.00px;font-size:17.4px;color:#222;-webkit-text-stroke:0.2px;">Monthly Inflation (%) 2020 to 2021</span>
<svg class="abs" style="left:1062px;top:686px" width="441" height="175" viewBox="1062 686 441 175" font-family="'Liberation Sans',sans-serif">
<rect x="1062" y="686" width="441" height="175" fill="#fff"/>
<rect x="1105.20" y="750.04" width="9.7" height="115.96" fill="#4f81bd"/>
<rect x="1136.05" y="747.68" width="9.7" height="118.32" fill="#4f81bd"/>
<rect x="1166.90" y="754.76" width="9.7" height="111.24" fill="#4f81bd"/>
<rect x="1197.75" y="750.04" width="9.7" height="115.96" fill="#4f81bd"/>
<rect x="1228.60" y="728.80" width="9.7" height="137.20" fill="#4f81bd"/>
<rect x="1259.45" y="724.08" width="9.7" height="141.92" fill="#4f81bd"/>
<rect x="1290.30" y="719.36" width="9.7" height="146.64" fill="#4f81bd"/>
<rect x="1321.15" y="740.60" width="9.7" height="125.40" fill="#4f81bd"/>
<rect x="1352.00" y="752.40" width="9.7" height="113.60" fill="#4f81bd"/>
<rect x="1382.85" y="759.48" width="9.7" height="106.52" fill="#4f81bd"/>
<rect x="1413.70" y="754.76" width="9.7" height="111.24" fill="#4f81bd"/>
<rect x="1444.55" y="735.88" width="9.7" height="130.12" fill="#4f81bd"/>
<rect x="1475.40" y="731.16" width="9.7" height="134.84" fill="#4f81bd"/>
<text x="1067.2" y="861.90" font-size="9.6" fill="#555" textLength="14" lengthAdjust="spacingAndGlyphs">1.0</text>
<text x="1067.2" y="838.30" font-size="9.6" fill="#555" textLength="14" lengthAdjust="spacingAndGlyphs">2.0</text>
<text x="1067.2" y="814.70" font-size="9.6" fill="#555" textLength="14" lengthAdjust="spacingAndGlyphs">3.0</text>
<text x="1067.2" y="791.10" font-size="9.6" fill="#555" textLength="14" lengthAdjust="spacingAndGlyphs">4.0</text>
<text x="1067.2" y="767.50" font-size="9.6" fill="#555" textLength="14" lengthAdjust="spacingAndGlyphs">5.0</text>
<text x="1067.2" y="743.90" font-size="9.6" fill="#555" textLength="14" lengthAdjust="spacingAndGlyphs">6.0</text>
<text x="1067.2" y="720.30" font-size="9.6" fill="#555" textLength="14" lengthAdjust="spacingAndGlyphs">7.0</text>
<text x="1067.2" y="696.70" font-size="9.6" fill="#555" textLength="14" lengthAdjust="spacingAndGlyphs">8.0</text>
<text x="1110.85" y="741.80" font-size="9.6" fill="#3a3a3a" text-anchor="middle" textLength="13.8" lengthAdjust="spacingAndGlyphs">5.6</text>
<text x="1450.20" y="727.60" font-size="9.6" fill="#3a3a3a" text-anchor="middle" textLength="13.8" lengthAdjust="spacingAndGlyphs">6.2</text>
<text x="1481.05" y="723.30" font-size="9.6" fill="#3a3a3a" text-anchor="middle" textLength="13.8" lengthAdjust="spacingAndGlyphs">6.4</text>
</svg>
</main>
</div>
</body></html>
